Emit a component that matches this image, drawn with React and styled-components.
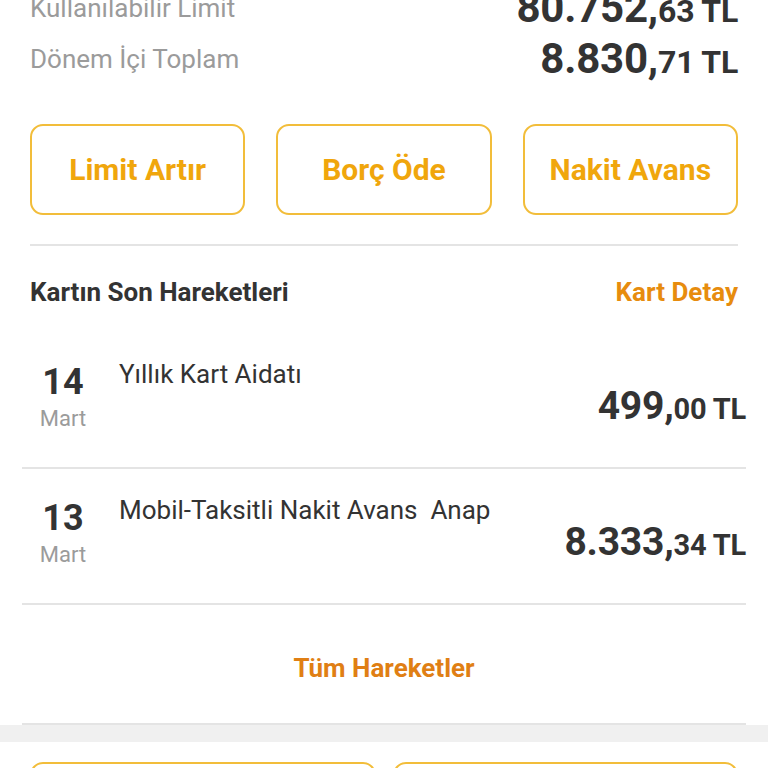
import React from 'react';
import styled, { createGlobalStyle } from 'styled-components';

const GlobalStyle = createGlobalStyle`
  html, body {
    margin: 0;
    padding: 0;
    background: #ffffff;
  }
  body {
    font-family: Roboto, "Liberation Sans", sans-serif;
    color: #333333;
    overflow: hidden;
  }
`;

const summary = [
  { label: 'Kullanılabilir Limit', whole: '80.752,', cents: '63 TL' },
  { label: 'Dönem İçi Toplam', whole: '8.830,', cents: '71 TL' },
];

const actions = ['Limit Artır', 'Borç Öde', 'Nakit Avans'];

const movements = [
  { day: '14', month: 'Mart', title: 'Yıllık Kart Aidatı', whole: '499,', cents: '00 TL' },
  { day: '13', month: 'Mart', title: 'Mobil-Taksitli Nakit Avans\u00a0\u00a0Anap', whole: '8.333,', cents: '34 TL' },
];

export default function App() {
  return (
    <>
      <GlobalStyle />
      <Page>
        <Card>
          <Summary>
            {summary.map((s) => (
              <SummaryRow key={s.label}>
                <Label>{s.label}</Label>
                <Amount size={42} small={32}>
                  {s.whole}
                  <span>{s.cents}</span>
                </Amount>
              </SummaryRow>
            ))}
          </Summary>
          <Actions>
            {actions.map((a) => (
              <ActionButton key={a}>{a}</ActionButton>
            ))}
          </Actions>
          <Divider />
          <SectionHead>
            <SectionTitle>Kartın Son Hareketleri</SectionTitle>
            <LinkText>Kart Detay</LinkText>
          </SectionHead>
          <List>
            {movements.map((m) => (
              <Movement key={m.day}>
                <DateBox>
                  <Day>{m.day}</Day>
                  <Month>{m.month}</Month>
                </DateBox>
                <Title>{m.title}</Title>
                <MoveAmount size={39} small={29}>
                  {m.whole}
                  <span>{m.cents}</span>
                </MoveAmount>
              </Movement>
            ))}
            <AllLink>Tüm Hareketler</AllLink>
          </List>
        </Card>
        <Gap />
        <Card>
          <BottomActions>
            <OutlineBox />
            <OutlineBox />
          </BottomActions>
        </Card>
      </Page>
    </>
  );
}

const Page = styled.div`
  width: 768px;
  height: 768px;
  overflow: hidden;
  background: #ffffff;
`;

const Card = styled.div`
  background: #ffffff;
`;

const Summary = styled.div`
  margin-top: -18px;
  padding: 0 30px;
`;

const SummaryRow = styled.div`
  display: flex;
  justify-content: space-between;
  align-items: center;
  height: 51px;
`;

const Label = styled.div`
  font-size: 26px;
  color: #9b9b9b;
`;

const Amount = styled.div`
  font-weight: 700;
  font-size: ${(p) => p.size}px;
  color: #333333;
  letter-spacing: -0.2px;
  span {
    font-size: ${(p) => p.small}px;
  }
`;

const Actions = styled.div`
  display: grid;
  grid-template-columns: repeat(3, 1fr);
  gap: 31px;
  padding: 0 30px;
  margin-top: 40px;
`;

const ActionButton = styled.div`
  height: 91px;
  box-sizing: border-box;
  border: 2px solid #f2bd3a;
  border-radius: 13px;
  display: flex;
  align-items: center;
  justify-content: center;
  font-size: 30px;
  font-weight: 700;
  color: #f0a60c;
`;

const Divider = styled.div`
  height: 2px;
  background: #e4e4e4;
  margin: 29px 30px 0;
`;

const SectionHead = styled.div`
  display: flex;
  justify-content: space-between;
  align-items: center;
  box-sizing: border-box;
  padding: 4px 30px 0;
  height: 87px;
`;

const SectionTitle = styled.div`
  font-size: 26px;
  font-weight: 700;
  color: #333333;
`;

const LinkText = styled.div`
  font-size: 26px;
  font-weight: 700;
  color: #e78c0e;
`;

const List = styled.div`
  padding: 0 22px;
`;

const Movement = styled.div`
  display: grid;
  grid-template-columns: 82px 1fr auto;
  column-gap: 15px;
  height: 136px;
  box-sizing: border-box;
  padding-top: 30px;
  border-bottom: 2px solid #e4e4e4;
`;

const DateBox = styled.div`
  display: flex;
  flex-direction: column;
  align-items: center;
`;

const Day = styled.div`
  font-size: 36px;
  font-weight: 700;
  line-height: 38px;
  color: #333333;
`;

const Month = styled.div`
  font-size: 22px;
  line-height: 26px;
  margin-top: 5px;
  color: #9b9b9b;
`;

const Title = styled.div`
  font-size: 26px;
  line-height: 28px;
  margin-top: -3px;
  color: #333333;
`;

const MoveAmount = styled(Amount)`
  margin-top: 21px;
  line-height: 44px;
`;

const AllLink = styled.div`
  display: flex;
  align-items: center;
  justify-content: center;
  box-sizing: border-box;
  height: 120px;
  padding-top: 8px;
  border-bottom: 2px solid #e4e4e4;
  font-size: 26px;
  font-weight: 700;
  color: #e07f14;
`;

const Gap = styled.div`
  height: 17px;
  background: #f0f0f0;
`;

const BottomActions = styled.div`
  display: grid;
  grid-template-columns: 1fr 1fr;
  gap: 17px;
  padding: 20px 30px 0;
`;

const OutlineBox = styled.div`
  height: 91px;
  box-sizing: border-box;
  border: 2px solid #f2bd3a;
  border-radius: 13px;
`;
